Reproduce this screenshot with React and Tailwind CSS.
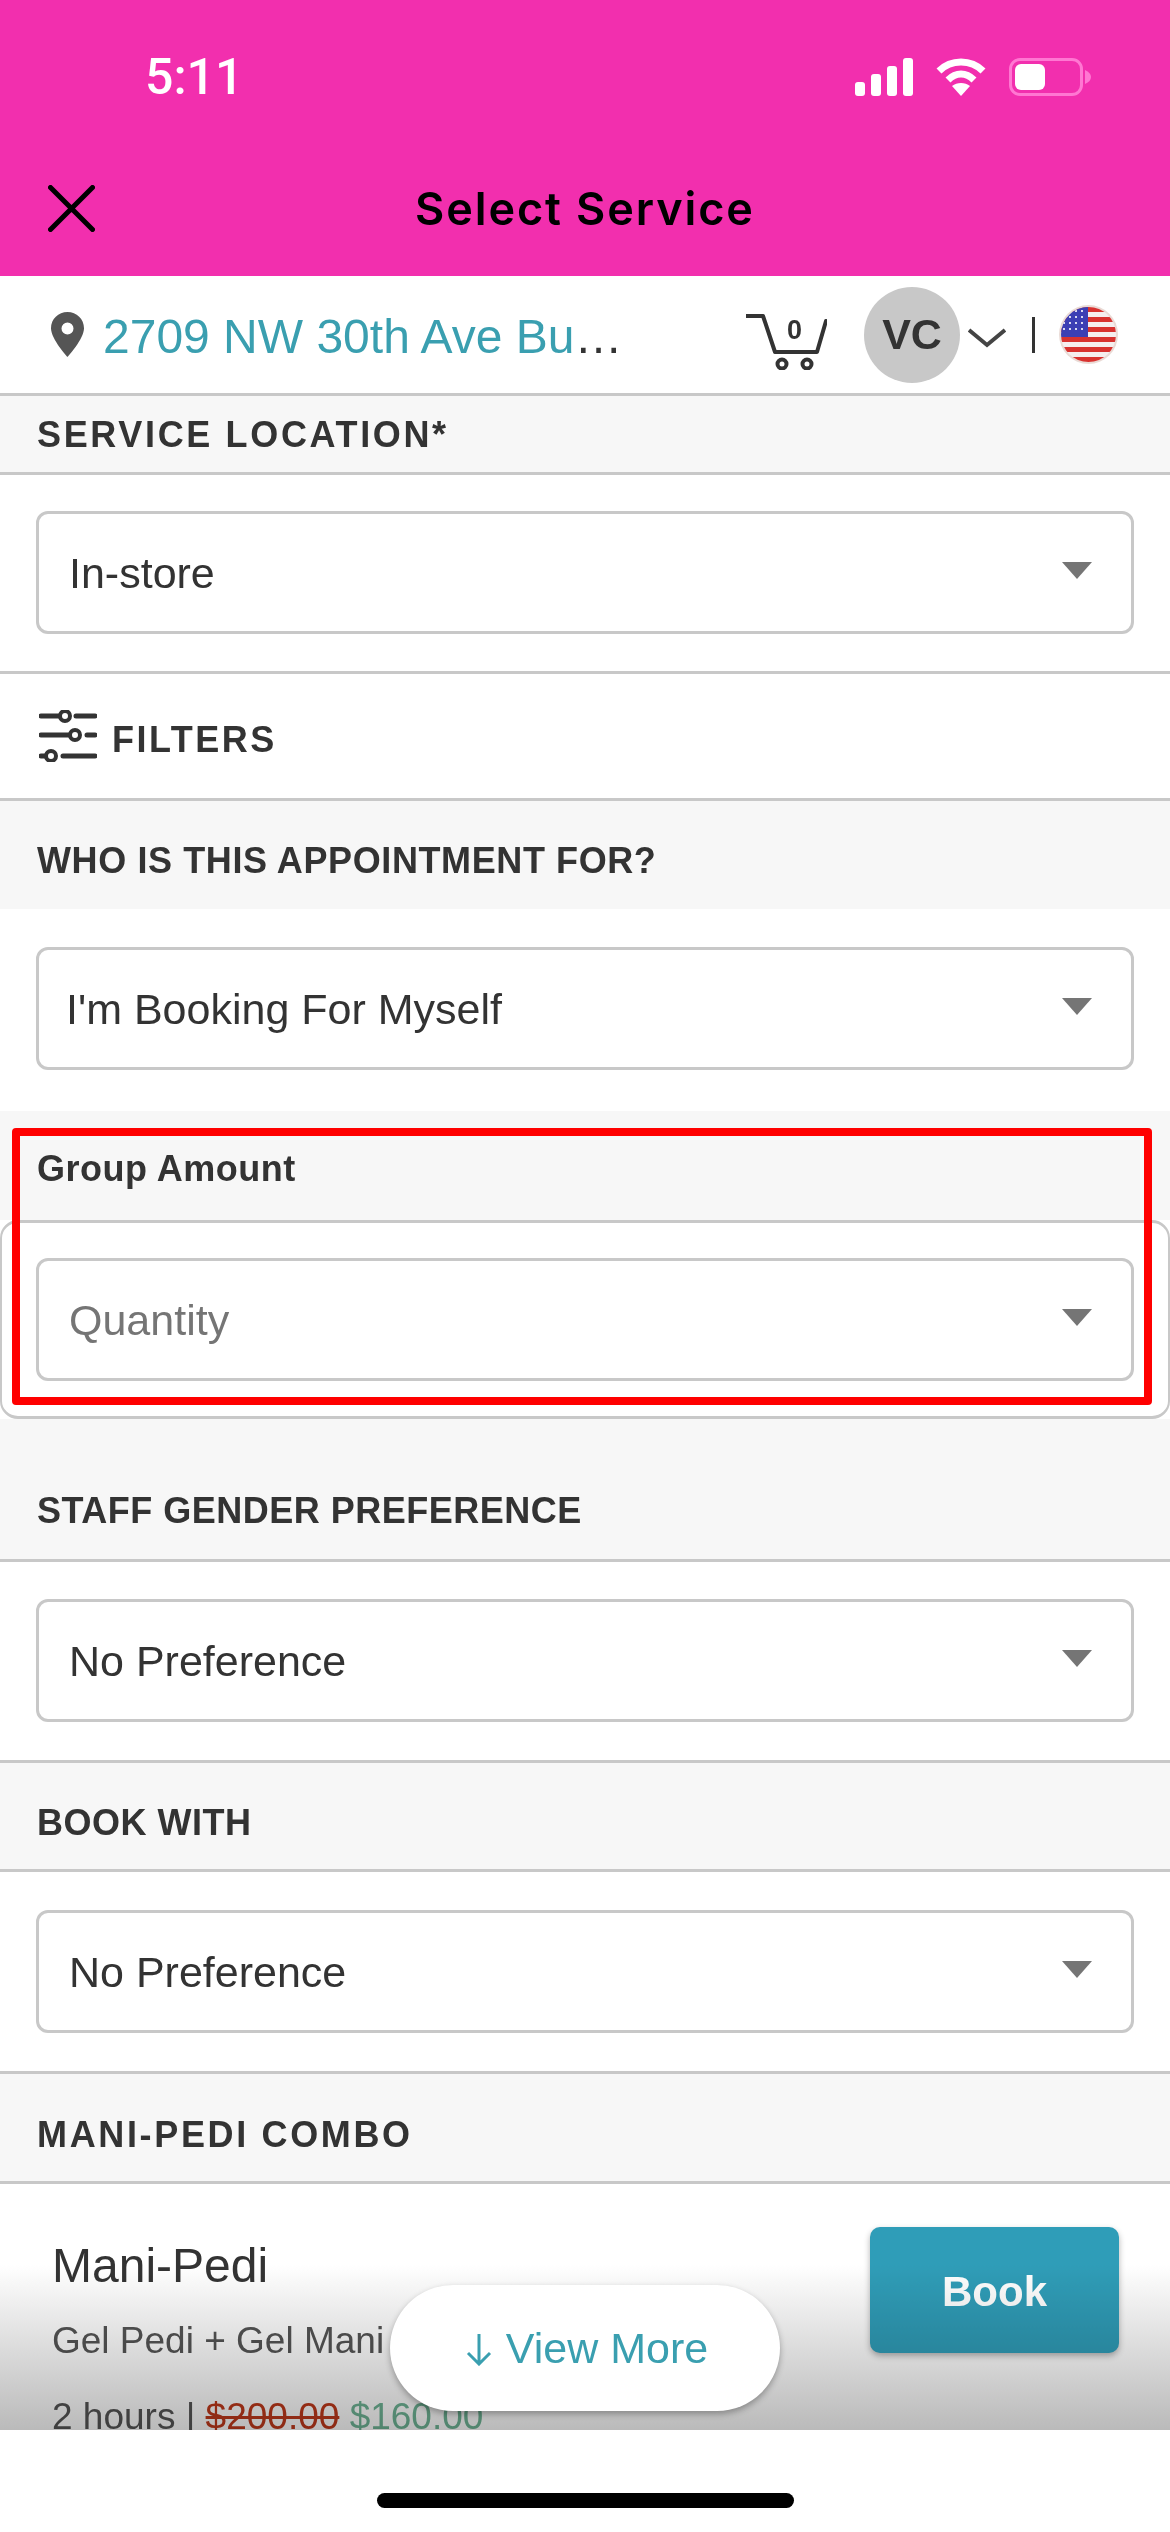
// App.jsx
import React from "react";

const sans = { fontFamily: '"Liberation Sans", Arial, sans-serif' };

function Caret() {
  return (
    <svg width="30" height="17" viewBox="0 0 30 17" className="shrink-0">
      <path d="M0 0H30L15 17Z" fill="#757575" />
    </svg>
  );
}

function Select({ value, muted, pad = "pl-[30px]" }) {
  return (
    <div className={`flex h-[123px] items-center justify-between rounded-[12px] border-[3px] border-[#c8c8c8] bg-white ${pad} pr-[39px]`}>
      <span className={`mt-[2px] text-[43px] leading-none ${muted ? "text-[#757575]" : "text-[#333]"}`}>{value}</span>
      <div className="mb-[4px]">
        <Caret />
      </div>
    </div>
  );
}

function Heading({ children, className = "", tracking = "tracking-[0.5px]" }) {
  return (
    <div className={`flex items-center border-b-[3px] border-[#c8c8c8] bg-[#f7f7f7] px-[37px] ${className}`}>
      <span className={`text-[36px] font-bold leading-none text-[#333] ${tracking}`}>{children}</span>
    </div>
  );
}

function Signal() {
  return (
    <svg width="58" height="38" viewBox="0 0 58 38" fill="#fff">
      <rect x="0" y="24" width="10" height="14" rx="3" />
      <rect x="16" y="16" width="10" height="22" rx="3" />
      <rect x="32" y="8" width="10" height="30" rx="3" />
      <rect x="48" y="0" width="10" height="38" rx="3" />
    </svg>
  );
}

function Wifi() {
  return (
    <svg width="50" height="38" viewBox="0 0 50 38" fill="none" stroke="#fff" strokeWidth="7">
      <path d="M3 13C15 1 35 1 47 13" />
      <path d="M12 22C20 14 30 14 38 22" />
      <path d="M16 28L25 38L34 28C29 24 21 24 16 28Z" fill="#fff" stroke="none" />
    </svg>
  );
}

function Battery() {
  return (
    <div className="flex items-center">
      <div className="flex h-[38px] w-[74px] items-center rounded-[11px] border-[3px] border-[#ff77d2] pl-[3px]">
        <div className="h-[26px] w-[30px] rounded-[6px] bg-white" />
      </div>
      <svg width="6" height="14" viewBox="0 0 6 14" className="ml-[2px]">
        <path d="M0 0C4 2 6 4 6 7C6 10 4 12 0 14Z" fill="#ff77d2" />
      </svg>
    </div>
  );
}

function Pin() {
  return (
    <svg width="33" height="45" viewBox="0 0 33 45" className="shrink-0">
      <path
        fillRule="evenodd"
        d="M16.5 0C7.4 0 0 7.2 0 16.2C0 27 16.5 45 16.5 45S33 27 33 16.2C33 7.2 25.6 0 16.5 0ZM16.5 10.5A6 6 0 1 1 16.5 22.5A6 6 0 1 1 16.5 10.5Z"
        fill="#555"
      />
    </svg>
  );
}

function Cart() {
  return (
    <div className="relative mt-[14px] h-[56px] w-[81px] shrink-0">
      <svg width="81" height="56" viewBox="0 0 81 56" fill="none" stroke="#333" strokeWidth="4">
        <path d="M0 2H17L29 38H71L80 7" strokeLinecap="round" strokeLinejoin="round" />
        <circle cx="36" cy="50" r="4.5" />
        <circle cx="61" cy="50" r="4.5" />
      </svg>
      <span className="absolute left-[41px] top-[3px] text-[27px] font-bold leading-none text-[#333]">0</span>
    </div>
  );
}

function Flag() {
  return (
    <svg width="59" height="59" viewBox="0 0 59 59" className="shrink-0">
      <defs>
        <clipPath id="flagClip">
          <circle cx="29.5" cy="29.5" r="27.5" />
        </clipPath>
      </defs>
      <circle cx="29.5" cy="29.5" r="29.5" fill="#eadbd6" />
      <g clipPath="url(#flagClip)">
        <rect width="59" height="59" fill="#f5eeee" />
        <rect y="2" width="59" height="5" fill="#d8322f" />
        <rect y="12" width="59" height="5" fill="#d8322f" />
        <rect y="22" width="59" height="5" fill="#d8322f" />
        <rect y="32" width="59" height="5" fill="#d8322f" />
        <rect y="42" width="59" height="5" fill="#d8322f" />
        <rect y="52" width="59" height="5" fill="#d8322f" />
        <rect width="29" height="32" fill="#3c3fb4" />
        {[6, 12, 18, 24].map((y) =>
          [5, 11, 17, 23].map((x) => <circle key={`${x}-${y}`} cx={x} cy={y} r="1.1" fill="#fff" />)
        )}
      </g>
    </svg>
  );
}

function FiltersIcon() {
  return (
    <svg width="58" height="52" viewBox="0 0 58 52" fill="none" stroke="#333" strokeWidth="5" strokeLinecap="round">
      <path d="M2 6H20M37 6H56" />
      <circle cx="26" cy="6" r="5" strokeWidth="4" fill="#fff" />
      <path d="M2 25H30M48 25H56" />
      <circle cx="36" cy="25" r="5" strokeWidth="4" fill="#fff" />
      <path d="M2 46H6M24 46H56" />
      <circle cx="12" cy="46" r="5" strokeWidth="4" fill="#fff" />
    </svg>
  );
}

export default function App() {
  return (
    <div className="flex h-[2532px] w-[1170px] flex-col overflow-hidden bg-white" style={sans}>
      <header className="h-[276px] shrink-0 bg-[#f22fae]">
        <div className="flex items-center justify-between pl-[145px] pr-[79px] pt-[58px]">
          <span className="font-['Roboto',sans-serif] text-[50px] font-medium leading-[38px] text-white">5:11</span>
          <div className="flex items-center gap-[23px]">
            <Signal />
            <Wifi />
            <Battery />
          </div>
        </div>
        <div className="relative mt-[89px] flex h-[47px] items-center justify-center">
          <svg width="47" height="47" viewBox="0 0 47 47" className="absolute left-[48px] top-0" fill="none" stroke="#000" strokeWidth="5" strokeLinecap="round">
            <path d="M2.5 2.5L44.5 44.5M44.5 2.5L2.5 44.5" />
          </svg>
          <span className="font-['Inter',sans-serif] text-[45px] font-semibold leading-none tracking-[1.9px] text-black">Select Service</span>
        </div>
      </header>

      <div className="relative flex-1 overflow-hidden">
        <div className="flex h-[120px] items-center border-b-[3px] border-[#c8c8c8] pl-[51px] pr-[52px]">
          <Pin />
          <span className="ml-[19px] mt-[5px] text-[48px] leading-none text-[#3a9fb0]">2709 NW 30th Ave Bu<span className="text-[#333]">…</span></span>
          <div className="ml-auto flex items-center">
            <Cart />
            <div className="ml-[37px] flex h-[96px] w-[96px] items-center justify-center rounded-full bg-[#c8c8c8] text-[43px] font-bold text-[#333]">VC</div>
            <svg width="38" height="20" viewBox="0 0 38 20" fill="none" stroke="#444" strokeWidth="4" className="ml-[8px] mt-[6px]">
              <path d="M1 2L19 17L37 2" />
            </svg>
            <div className="ml-[26px] h-[36px] w-[3px] bg-[#333]" />
            <div className="ml-[24px]">
              <Flag />
            </div>
          </div>
        </div>

        <Heading className="h-[79px] pt-[2px]" tracking="tracking-[2.65px]">SERVICE LOCATION*</Heading>

        <div className="border-b-[3px] border-[#c8c8c8] px-[36px] pb-[37px] pt-[36px]">
          <Select value="In-store" />
        </div>

        <div className="flex h-[127px] items-center border-b-[3px] border-[#c8c8c8] pl-[39px]">
          <FiltersIcon />
          <span className="ml-[15px] mt-[8px] text-[36px] font-bold leading-none tracking-[2.5px] text-[#333]">FILTERS</span>
        </div>

        <div className="flex h-[108px] items-center bg-[#f7f7f7] px-[37px] pt-[12px]">
          <span className="text-[36px] font-bold leading-none tracking-[0.6px] text-[#333]">WHO IS THIS APPOINTMENT FOR?</span>
        </div>

        <div className="px-[36px] pb-[41px] pt-[38px]">
          <Select value="I'm Booking For Myself" pad="pl-[27px]" />
        </div>

        <div className="h-[109px] bg-[#f7f7f7] px-[37px] pt-[40px]">
          <span className="text-[36px] font-bold leading-none tracking-[0.5px] text-[#333]">Group Amount</span>
        </div>

        <div className="rounded-[18px] border-x-[2px] border-y-[3px] border-[#c8c8c8] bg-white px-[34px] py-[35px]">
          <Select value="Quantity" muted pad="pl-[30px]" />
        </div>

        <Heading className="h-[143px] pt-[43px]">STAFF GENDER PREFERENCE</Heading>

        <div className="border-b-[3px] border-[#c8c8c8] px-[36px] pb-[38px] pt-[37px]">
          <Select value="No Preference" />
        </div>

        <Heading className="h-[109px] pt-[13px]">BOOK WITH</Heading>

        <div className="border-b-[3px] border-[#c8c8c8] px-[36px] py-[38px]">
          <Select value="No Preference" />
        </div>

        <Heading className="h-[110px] pt-[14px]" tracking="tracking-[2.65px]">MANI-PEDI COMBO</Heading>

        <div className="flex items-start justify-between pl-[52px] pr-[51px] pt-[43px]">
          <div>
            <div className="mt-[15px] text-[48px] leading-none text-[#333]">Mani-Pedi</div>
            <div className="mt-[32px] text-[37px] leading-none text-[#555]">Gel Pedi + Gel Mani</div>
            <div className="mt-[39px] whitespace-nowrap text-[37px] leading-none text-[#555]">
              2 hours | <span className="text-[#c0391b] line-through">$200.00</span> <span className="text-[#6fb596]">$160.00</span>
            </div>
          </div>
          <div className="flex h-[126px] w-[249px] items-center justify-center rounded-[10px] bg-[#2f9db8] pt-[2px] text-[42px] font-bold text-white shadow-[0_3px_6px_rgba(0,0,0,0.3)]">
            Book
          </div>
        </div>

        <div className="pointer-events-none absolute inset-x-0 bottom-0 h-[165px] bg-gradient-to-b from-white to-[#bababa] mix-blend-multiply" />

        <div className="absolute bottom-[19px] left-[390px] flex h-[126px] w-[390px] items-center justify-center gap-[14px] rounded-[63px] bg-white pl-[4px] text-[#3a9fb0] shadow-[0_3px_6px_rgba(0,0,0,0.3)]">
          <svg width="26" height="32" viewBox="0 0 26 32" fill="none" stroke="#3a9fb0" strokeWidth="3" className="mt-[4px]">
            <path d="M13 0V30M2 19L13 30L24 19" />
          </svg>
          <span className="text-[43px] leading-none">View More</span>
        </div>

        <div className="pointer-events-none absolute left-[12px] top-[852px] h-[277px] w-[1140px] rounded-[4px] border-[8px] border-[#ff0000]" />
      </div>

      <div className="flex h-[102px] shrink-0 items-start justify-center bg-white pt-[63px]">
        <div className="h-[15px] w-[417px] rounded-full bg-black" />
      </div>
    </div>
  );
}
